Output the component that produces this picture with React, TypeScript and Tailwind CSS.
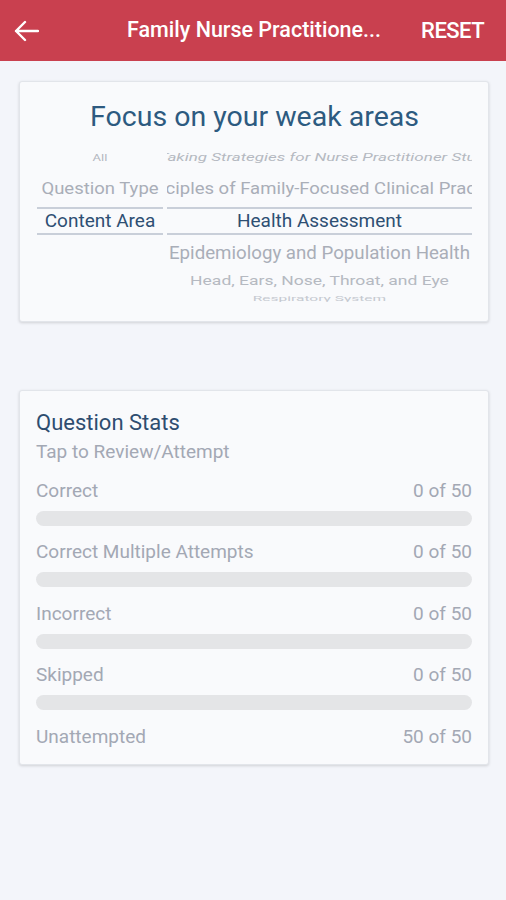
import React from "react";

const stats = [
  { label: "Correct", value: "0 of 50", bar: true },
  { label: "Correct Multiple Attempts", value: "0 of 50", bar: true },
  { label: "Incorrect", value: "0 of 50", bar: true },
  { label: "Skipped", value: "0 of 50", bar: true },
  { label: "Unattempted", value: "50 of 50", bar: false },
];

function ArrowLeft() {
  return (
    <svg width="26" height="22" viewBox="0 0 26 22" fill="none">
      <path
        d="M25 11H3M12 2L3 11l9 9"
        stroke="white"
        strokeWidth="2.4"
        strokeLinecap="round"
        strokeLinejoin="round"
      />
    </svg>
  );
}

export default function App() {
  return (
    <div
      className="min-h-[900px] w-[506px] bg-[#f3f5fa]"
      style={{ fontFamily: "Roboto, 'Noto Sans', sans-serif" }}
    >
      {/* Top bar */}
      <header className="flex h-[61px] items-center bg-[#c9404f] pl-[13px] pr-[22px] text-white">
        <ArrowLeft />
        <h1 className="ml-[88px] flex-1 whitespace-nowrap text-[21.5px] font-medium">
          Family Nurse Practitione...
        </h1>
        <button className="text-[22px] font-medium tracking-tight">RESET</button>
      </header>

      {/* Weak areas picker */}
      <section className="ml-[19px] mr-[17px] mt-[20px] rounded-[3px] border border-[#e2e5ea] bg-[#f9fafc] pb-[19px] pl-[17px] pr-[16px] pt-[18px] shadow-[0_1px_3px_rgba(0,0,0,0.15)]">
        <h2 className="whitespace-nowrap text-center text-[28.5px] leading-[33px] text-[#2d5a80]">
          Focus on your weak areas
        </h2>
        <div className="mt-[12px] flex h-[157px] gap-[4px] overflow-hidden">
          {/* left column */}
          <div className="flex w-[126px] shrink-0 flex-col">
            <div className="flex h-[26px] shrink-0 items-center justify-center text-[13px] text-[#b3b7bf] [transform:scaleY(0.75)]">
              All
            </div>
            <div className="flex h-[36px] shrink-0 items-center justify-center whitespace-nowrap text-[18.5px] text-[#a9aeb8] [transform:scaleY(0.92)]">
              Question Type
            </div>
            <div className="h-[2px] shrink-0 bg-[#c9cfd9]" />
            <div className="flex h-[24px] shrink-0 items-center justify-center whitespace-nowrap text-[19px] text-[#2e4f73]">
              Content Area
            </div>
            <div className="h-[2px] shrink-0 bg-[#c9cfd9]" />
          </div>
          {/* right column: texts wider than the wheel are clipped on both sides */}
          <div className="flex w-[305px] shrink-0 flex-col overflow-hidden">
            <div className="flex h-[26px] shrink-0 items-center justify-center whitespace-nowrap text-[17px] italic text-[#b5b9c1] [transform:scaleY(0.62)]">
              Test-Taking Strategies for Nurse Practitioner Students
            </div>
            <div className="flex h-[36px] shrink-0 items-center justify-center whitespace-nowrap text-[18.5px] text-[#a9aeb8] [transform:scaleY(0.92)]">
              Principles of Family-Focused Clinical Practice
            </div>
            <div className="h-[2px] shrink-0 bg-[#c9cfd9]" />
            <div className="flex h-[24px] shrink-0 items-center justify-center whitespace-nowrap text-[19px] text-[#2e4f73]">
              Health Assessment
            </div>
            <div className="h-[2px] shrink-0 bg-[#c9cfd9]" />
            <div className="flex h-[36px] shrink-0 items-center justify-center whitespace-nowrap text-[18.7px] text-[#a9aeb8] [transform:scaleY(0.94)]">
              Epidemiology and Population Health
            </div>
            <div className="flex h-[20px] shrink-0 items-center justify-center whitespace-nowrap text-[17.5px] text-[#b5b9c1] [transform:scaleY(0.72)]">
              Head, Ears, Nose, Throat, and Eye
            </div>
            <div className="flex h-[16px] shrink-0 items-center justify-center whitespace-nowrap text-[15.5px] text-[#c5c9d0] [transform:scaleY(0.45)]">
              Respiratory System
            </div>
          </div>
        </div>
      </section>

      {/* Question stats */}
      <section className="ml-[19px] mr-[17px] mt-[68px] rounded-[3px] border border-[#e2e5ea] bg-[#f9fafc] pb-[15px] pl-[16px] pr-[16px] pt-[19px] shadow-[0_1px_3px_rgba(0,0,0,0.15)]">
        <h3 className="text-[22px] leading-[26px] text-[#2e4d70]">Question Stats</h3>
        <p className="mt-[5px] text-[19px] leading-[22px] text-[#a3a8b4]">
          Tap to Review/Attempt
        </p>
        <div className="mt-[16px] flex flex-col">
          {stats.map((s, i) => (
            <div key={s.label} className={i > 0 ? "mt-[15px]" : ""}>
              <div className="flex h-[24px] items-center justify-between text-[19px] text-[#a3a8b4]">
                <span>{s.label}</span>
                <span>{s.value}</span>
              </div>
              {s.bar && (
                <div className="mt-[7.5px] h-[15px] rounded-full bg-[#e4e5e7]" />
              )}
            </div>
          ))}
        </div>
      </section>
    </div>
  );
}
